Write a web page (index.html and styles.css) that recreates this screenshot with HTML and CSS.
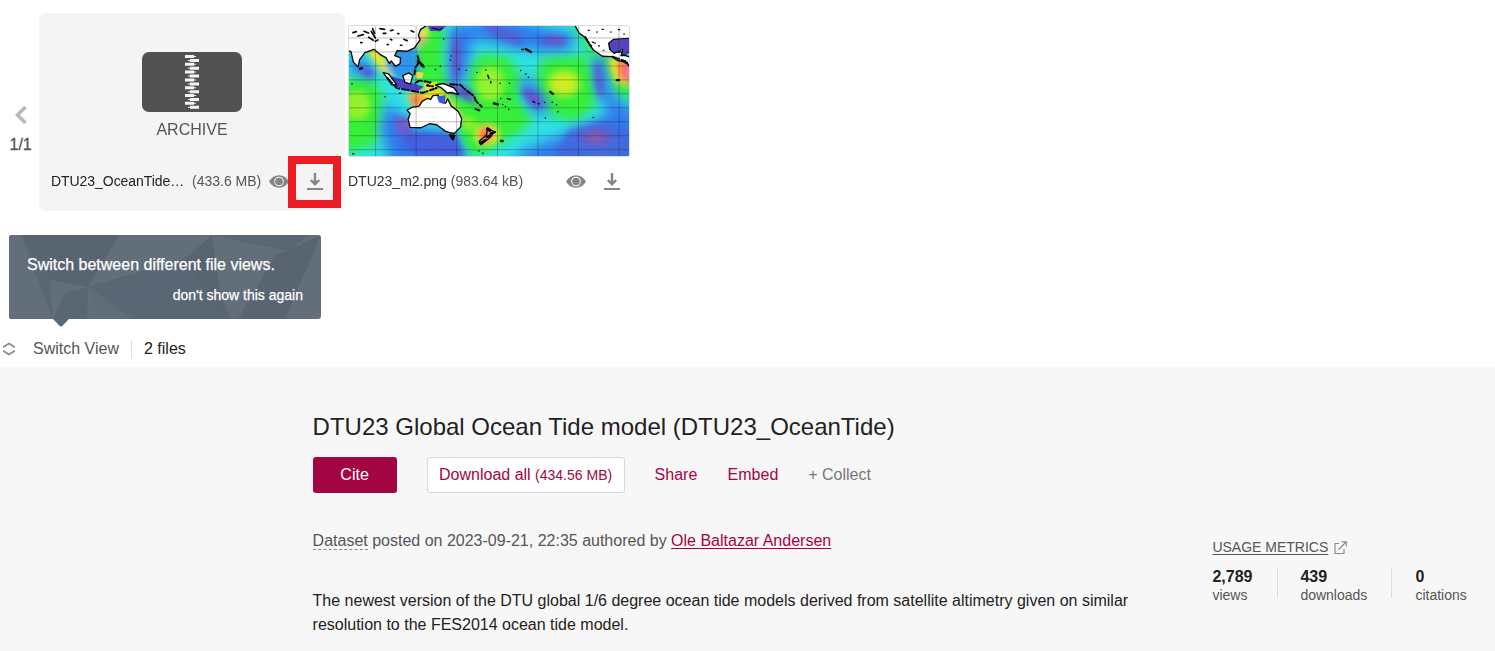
FILE: index.html
```
<!DOCTYPE html>
<html lang="en">
<head>
<meta charset="utf-8">
<title>DTU23 Global Ocean Tide model</title>
<link rel="stylesheet" href="styles.css">
</head>
<body>
<svg class="defs" width="0" height="0">
  <symbol id="eye" viewBox="0 0 20 13"><path fill="#858585" fill-rule="evenodd" d="M0 6.500C2.500 2.300 6 .3 10 .3s7.500 2 10 6.200c-2.500 4.200-6 6.200-10 6.200S2.500 10.700 0 6.500zM10 1.700a4.800 4.800 0 1 0 0 9.600 4.800 4.800 0 0 0 0-9.600z"/><circle cx="10" cy="6.500" r="3.800" fill="#858585"/></symbol>
  <symbol id="download" viewBox="0 0 16 17"><path d="M8 0v11M3.800 7L8 11.200 12.200 7" fill="none" stroke="#858585" stroke-width="2.400"/><path d="M0 15h16v2H0z" fill="#858585"/></symbol>
</svg>
<section class="gallery">
  <div class="strip">
    <nav class="pager">
      <svg width="13" height="20" viewBox="0 0 13 20"><path d="M11.500 2L3.500 10l8 8" fill="none" stroke="#bababa" stroke-width="3.600"/></svg>
      <span>1/1</span>
    </nav>
    <article class="card">
      <svg class="archive" width="100" height="60" viewBox="0 0 100 60">
        <rect width="100" height="60" rx="7" fill="#525252"/>
        <path fill="#f4f4f4" d="M43 3h9v1h2v1h-2v1h-9zM43 10.800h9v1h2v1h-2v1h-9zM43 18.600h9v1h2v1h-2v1h-9zM43 26.400h9v1h2v1h-2v1h-9zM43 34.200h9v1h2v1h-2v1h-9zM43 42h9v1h2v1h-2v1h-9zM43 49.800h9v1h2v1h-2v1h-9zM57 7h-9v1h-2v1h2v1h9zM57 14.800h-9v1h-2v1h2v1h9zM57 22.600h-9v1h-2v1h2v1h9zM57 30.400h-9v1h-2v1h2v1h9zM57 38.200h-9v1h-2v1h2v1h9zM57 46h-9v1h-2v1h2v1h9zM57 53.800h-9v1h-2v1h2v1h9z"/>
      </svg>
      <div class="kind">ARCHIVE</div>
      <div class="file-row">
        <span class="name">DTU23_OceanTide…</span>
        <span class="size">(433.6 MB)</span>
        <svg class="eye" width="20" height="13"><use href="#eye"/></svg>
        <svg class="down" width="16" height="17"><use href="#download"/></svg>
      </div>
      <div class="highlight"></div>
    </article>
    <article class="preview">
      <svg class="map" viewBox="25 32 843 391" preserveAspectRatio="none">
        <defs>
          <filter id="soft" x="-50%" y="-50%" width="200%" height="200%"><feGaussianBlur stdDeviation="16"/></filter>
          <filter id="wide" x="-50%" y="-50%" width="200%" height="200%"><feGaussianBlur stdDeviation="20"/></filter>
          <filter id="mid" x="-50%" y="-50%" width="200%" height="200%"><feGaussianBlur stdDeviation="9"/></filter>
        </defs>
        <rect x="25" y="32" width="843" height="391" fill="#2fe3e6"/>
        <g filter="url(#soft)">
          <path fill="#36ef38" d="M245 20L312 20L310 130L325 215L385 255L385 150L430 115L510 125L545 190L535 250L580 315L535 355L460 400L400 430L360 380L350 290L300 250L235 200L215 130zM0 190L85 185L125 225L125 310L110 385L40 410L0 410zM610 125L745 120L768 210L765 275L710 320L630 300L595 245L590 180zM680 10L740 50L800 125L850 130L890 260L830 240L790 150L735 90z"/>
        </g>
        <g filter="url(#wide)">
          <path fill="#3178ee" d="M330 30L520 10L640 45L710 60L690 102L610 108L520 95L400 70L370 200L330 210zM140 260L210 340L330 350L345 380L385 450L150 450L120 340zM535 185L580 200L625 260L620 300L570 280zM760 130L800 120L805 210L840 265L890 280L890 450L500 450L560 400L670 360L765 320L810 290L775 235zM30 110L110 165L90 190L30 170z"/>
        </g>
        <g filter="url(#mid)">
          <ellipse cx="450" cy="205" rx="42" ry="52" fill="#93f32e"/>
          <ellipse cx="672" cy="205" rx="52" ry="44" fill="#90f02a"/>
          <ellipse cx="672" cy="205" rx="34" ry="28" fill="#d0ed20"/>
          <ellipse cx="50" cy="270" rx="40" ry="44" fill="#91f12c"/>
          <ellipse cx="385" cy="325" rx="22" ry="22" fill="#8af12c"/>
          <ellipse cx="347" cy="125" rx="14" ry="80" fill="#4a68e0"/>
          <ellipse cx="348" cy="130" rx="8" ry="60" fill="#6b4cbb"/>
          <ellipse cx="490" cy="55" rx="70" ry="17" transform="rotate(25 490 55)" fill="#5360d7"/>
          <ellipse cx="642" cy="76" rx="39" ry="13" fill="#594bd1"/>
          <ellipse cx="645" cy="76" rx="17" ry="7" fill="#8b55bb"/>
          <ellipse cx="577" cy="248" rx="40" ry="16" transform="rotate(45 577 248)" fill="#5a55d0"/>
          <ellipse cx="580" cy="253" rx="18" ry="6" transform="rotate(45 580 253)" fill="#8a4fb8"/>
          <ellipse cx="777" cy="195" rx="11" ry="54" transform="rotate(-7 777 195)" fill="#5657d0"/>
          <path d="M155 290L215 350L350 360L375 430L250 425L195 400z" fill="#445edd"/>
          <ellipse cx="188" cy="330" rx="24" ry="28" fill="#735cc9"/>
          <path d="M690 345L790 320L880 350V440H630z" fill="#436bdf"/>
          <ellipse cx="768" cy="366" rx="48" ry="25" fill="#685abf"/>
          <ellipse cx="768" cy="368" rx="22" ry="11" fill="#8f5ca8"/>
          <path d="M310 200L390 220L410 270L340 235z" fill="#594ed0"/>
          <path d="M40 150L110 167L85 190z" fill="#594bd3"/>
          <path d="M65 85L115 80L155 190L115 160z" fill="#efe72b"/>
          <path d="M230 35L265 35L260 75L225 105z" fill="#f7ea3a"/>
          <ellipse cx="243" cy="72" rx="11" ry="14" fill="#fb7690"/>
          <path d="M170 95L225 75L238 170L180 200L135 155z" fill="#2d94ec"/>
          <path d="M195 235L300 215L365 300L350 320L220 285z" fill="#f3df21"/>
          <path d="M205 238L255 240L225 285z" fill="#fd6253"/>
          <ellipse cx="440" cy="359" rx="38" ry="32" fill="#f2ec26"/>
          <ellipse cx="437" cy="358" rx="21" ry="24" fill="#ff5d53"/>
          <path d="M805 130L870 125V215L825 200z" fill="#f1e729"/>
          <path d="M830 140L875 135V205L842 195z" fill="#ff5748"/>
          <ellipse cx="866" cy="170" rx="17" ry="24" fill="#ff7795"/>
        </g>
        <path fill="#4e43c7" d="M145 180L250 215L230 230L165 215zM262 32H318L300 48L270 47z"/>
        <path fill="#ebdf32" d="M224 170L250 172L245 190L225 188zM250 205L290 200L288 220L255 230z"/>
        <g fill="#fff" stroke="#080808" stroke-width="4" stroke-linejoin="round">
          <path d="M20 28H262L240 43L234 60L239 74L222 98L199 108L170 106L163 121L180 128L179 145L165 153L152 137L147 145L136 127L119 118L100 102L73 112L57 133L52 155L38 140L31 109L20 106z"/>
          <path d="M128 172L144 176L169 209L154 209zM187 181L205 173L217 181L210 207L193 201zM285 209L310 205L342 219L355 238L333 232L320 233L303 218z"/>
          <path d="M200 285L214 277L236 273L246 258L260 250L271 253L277 242L293 239L300 259L316 264L322 251L333 273L354 289L364 310L361 336L342 355L329 353L316 349L302 339L289 329L267 326L242 338L209 337L203 313L209 296z"/>
          <path d="M704 28L718 53L735 66L751 91L762 105L788 123L816 124L832 135L851 140L872 151V126L856 120L844 121L848 111L834 110L823 114L810 102L807 84L822 72L850 72L872 70V28z"/>
          <path fill="#f57997" d="M442 338L462 350L452 365L422 389L417 379L439 360z"/>
        </g>
        <path fill="#5942be" stroke="#111" stroke-width="3" d="M808 85L820 73L848 70L870 69V108L857 119L847 119L849 101L836 109L823 113L812 104z"/>
        <path fill="#375bdc" d="M289 244L296 262L313 267L316 240z"/>
        <g fill="none" stroke="#080808" stroke-linecap="round" stroke-linejoin="round">
          <path stroke-width="6" stroke-dasharray="12 6 3 8" d="M140 188L169 219L209 226L247 233L290 218M232 123L237 145L250 155M237 140L224 158L222 182M225 203L237 196L270 201L260 211L282 214M330 207L360 209L378 226L401 242L408 259L424 274M406 282L421 287M736 65L754 93M818 124L860 139L867 151"/>
          <path stroke-width="7" d="M233 138l14 12M58 161l6-2M329 361l13 1-4 11zM420 384l17-9M440 366l10-5M452 355l12-4M441 342l8 5M461 265l12 3M557 101l16 9M631 230l8 6M831 195h7M483 378h5"/>
          <path stroke-width="5" d="M37 52l10-3M52 62l16-4M70 48l14 5M92 48l12 20M96 40l6 14M84 66l14 9M104 78l8-4M118 40l14 2M128 54h8M150 46l8-2M150 72l4 2M190 72l10 4M212 46l8 4M172 55h3M140 88h3M60 82h4M180 90h4"/>
          <path stroke-width="3.500" d="M275 38l18 4M296 44l10-5M745 45h4M770 50h3M787 42h4M812 50h3M836 43h4M852 56h3M757 80l10 4M776 92h3M790 105h3"/>
          <path stroke-width="4.500" d="M310 71h.1M330 134h.1M332 122h.1M285 163h.1M300 153h.1M357 162h.1M378 165h.1M410 172h.1M437 164h.1M443 180l3 9M452 200v3M480 204h.1M508 204h.1M542 166h.1M557 176h.1M565 186h.1M496 274h.1M506 283h.1M482 250h.1M502 250l7 3M511 252h.1M488 268h.1M579 259l5 3M595 266h2M614 262h.1M637 261h.1M650 269h.1M654 290h.1M616 309h.1M760 307h.1M133 245h.1M34 206h.1M36 416h3M416 408h.1M428 415h.1M177 234h4M545 103h5"/>
        </g>
        <path fill="none" stroke="#111" stroke-opacity=".55" stroke-width="1.500" d="M105 32V423M227 32V423M349 32V423M472 32V423M594 32V423M716 32V423M838 32V423M25 68H868M25 110H868M25 152H868M25 194H868M25 236H868M25 278H868M25 320H868M25 362H868M25 404H868"/>
      </svg>
      <div class="file-row">
        <span class="png-name">DTU23_m2.png <span class="size">(983.64 kB)</span></span>
        <svg class="eye" width="20" height="13"><use href="#eye"/></svg>
        <svg class="down" width="16" height="17"><use href="#download"/></svg>
      </div>
    </article>
  </div>
  <aside class="tip">
    <svg class="facets" viewBox="0 0 312 84" preserveAspectRatio="none">
      <rect width="312" height="84" fill="#626f7a"/>
      <path fill="#596774" d="M12 0L41 44L44 84L56 58L79 52L195 8L222 84H0V0z"/>
      <path fill="#626f7a" d="M0 0H12L44 84H0zM41 45L79 52L56 58L44 84zM79 52L110 0H203L176 24zM79 52L99 84H78z"/>
      <path fill="#586571" d="M12 0H110L79 52L41 45zM176 24L203 0L214 84zM229 84L267 20L312 0L276 84z"/>
      <path fill="#596673" d="M79 52L176 24L214 84H126zM203 0H300L280 16z"/>
      <path fill="#5f6d78" d="M79 52L125 84H90z"/>
    </svg>
    <div class="tip-text">Switch between different file views.</div>
    <div class="tip-dismiss">don't show this again</div>
    <svg class="tip-arrow" width="16" height="8" viewBox="0 0 16 8"><path fill="#5a6874" d="M0 0h16L9.500 6.800q-1.500 1.200-3 0z"/></svg>
  </aside>
  <div class="viewbar">
    <svg width="12" height="14" viewBox="0 0 12 14"><path d="M0 5.200L6 1.500l6 3.700M0 8.800l6 3.700 6-3.700" fill="none" stroke="#888" stroke-width="1.800"/></svg>
    <span class="switch">Switch View</span>
    <span class="count">2 files</span>
  </div>
</section>
<main class="details">
  <div class="content">
    <h1>DTU23 Global Ocean Tide model (DTU23_OceanTide)</h1>
    <div class="actions">
      <span class="cite">Cite</span>
      <span class="all">Download all <small>(434.56 MB)</small></span>
      <span class="share">Share</span>
      <span class="embed">Embed</span>
      <span class="collect">+ Collect</span>
    </div>
    <p class="meta"><span class="type">Dataset</span> posted on 2023-09-21, 22:35 authored by <a>Ole Baltazar Andersen</a></p>
    <p class="description">The newest version of the DTU global 1/6 degree ocean tide models derived from satellite altimetry given on similar<br>resolution to the FES2014 ocean tide model.</p>
  </div>
  <aside class="metrics">
    <div class="metrics-title"><a>USAGE METRICS</a>
      <svg width="13" height="13" viewBox="0 0 13 13"><path d="M5 2.500H1v10h9V8M4.500 8.500L12 1M7.500.7h4.800v4.800" fill="none" stroke="#888" stroke-width="1.100"/></svg>
    </div>
    <div class="stats">
      <div class="views"><b>2,789</b><span>views</span></div>
      <div class="downloads"><b>439</b><span>downloads</span></div>
      <div class="citations"><b>0</b><span>citations</span></div>
    </div>
  </aside>
</main>
</body>
</html>
```
FILE: styles.css
```
* { box-sizing: border-box; }
body { margin: 0; background: #fff; color: #222; font: 16px/24px "Liberation Sans", Arial, sans-serif; overflow: hidden; white-space: nowrap; }
svg { display: block; flex: none; }
.defs { position: absolute; }
.gallery { height: 367px; padding-top: 13px; }
.strip { display: flex; height: 198px; }
.pager { width: 39px; padding: 92px 0 0 9.500px; color: #555; -webkit-text-stroke: .3px #555; }
.pager svg { margin-left: 4.500px; }
.pager span { display: block; margin-top: 8px; }
.card { position: relative; width: 306px; border-radius: 6px; background: #f4f4f4; padding-top: 39px; }
.archive { margin-left: 103px; }
.kind { width: 306px; height: 24px; margin-top: 6px; text-align: center; color: #555; }
.file-row { display: flex; align-items: center; height: 24px; font-size: 14px; }
.card .file-row { margin-top: 27px; padding-left: 12px; }
.name { width: 141px; letter-spacing: -.05px; }
.size { color: #555; }
.card .size { width: 77px; }
.card .down { margin-left: 18px; }
.highlight { position: absolute; left: 249px; top: 143px; width: 53px; height: 52px; border: 8px solid #ed1c24; }
.preview { width: 285px; padding: 12px 0 0 3px; }
.map { width: 282px; height: 132px; border: 1px solid #ddd; border-radius: 2px; }
.preview .file-row { margin-top: 12px; }
.png-name { width: 218px; color: #333; }
.preview .down { margin-left: 18px; }
.tip { position: relative; width: 312px; height: 84px; margin: 24px 0 0 9px; padding: 18px 18px 0; color: #fff; -webkit-text-stroke: .25px #fff; }
.facets { position: absolute; inset: 0; width: 312px; height: 84px; border-radius: 3px; }
.tip-text, .tip-dismiss { position: relative; }
.tip-dismiss { margin-top: 6px; text-align: right; font-size: 14px; }
.tip-arrow { position: absolute; left: 44px; top: 84px; }
.viewbar { display: flex; align-items: center; height: 26px; margin-top: 17px; padding-left: 3px; }
.switch { width: 99px; margin-left: 18px; color: #555; }
.count { height: 18px; line-height: 18px; padding-left: 12px; border-left: 1px solid #ddd; margin-left: -1px; }
.details { display: flex; height: 284px; padding-left: 312.600px; background: #f7f7f7; }
.content { width: 899px; padding-top: 44px; }
h1 { margin: 0; height: 32px; font-size: 24px; line-height: 32px; font-weight: 400; }
.actions { display: flex; align-items: center; height: 36px; margin-top: 14px; color: #a30542; }
.cite, .all { height: 36px; line-height: 36px; border-radius: 3px; text-align: center; }
.cite { width: 84px; background: #a30542; color: #fff; }
.all { width: 198px; margin-left: 30px; background: #fff; border: 1px solid #d8d8d8; line-height: 34px; }
.all small { font-size: 14px; }
.share { margin-left: 30px; width: 43px; }
.embed { margin-left: 30px; width: 50px; }
.collect { margin-left: 30.600px; color: #777; }
p { margin: 0; }
.meta { margin-top: 36px; color: #555; }
.meta .type { border-bottom: 1px dashed #888; }
.meta a { color: #a30542; text-decoration: underline; text-underline-offset: 2px; }
.description { margin-top: 36px; }
.metrics { width: 270px; padding: 168px 0 0 .8px; font-size: 14px; color: #555; }
.metrics-title { display: flex; gap: 6px; align-items: center; height: 24px; }
.metrics-title a { text-decoration: underline; text-underline-offset: 2px; }
.stats { display: flex; margin-top: 9px; height: 30px; }
.stats div { display: flex; flex-direction: column; }
.stats b { font-size: 16px; line-height: 18px; height: 18px; color: #222; }
.stats span { line-height: 18px; }
.views { width: 65px; }
.downloads { width: 114px; padding-left: 22px; border-left: 1px solid #ddd; }
.citations { padding-left: 23px; border-left: 1px solid #ddd; }
```
